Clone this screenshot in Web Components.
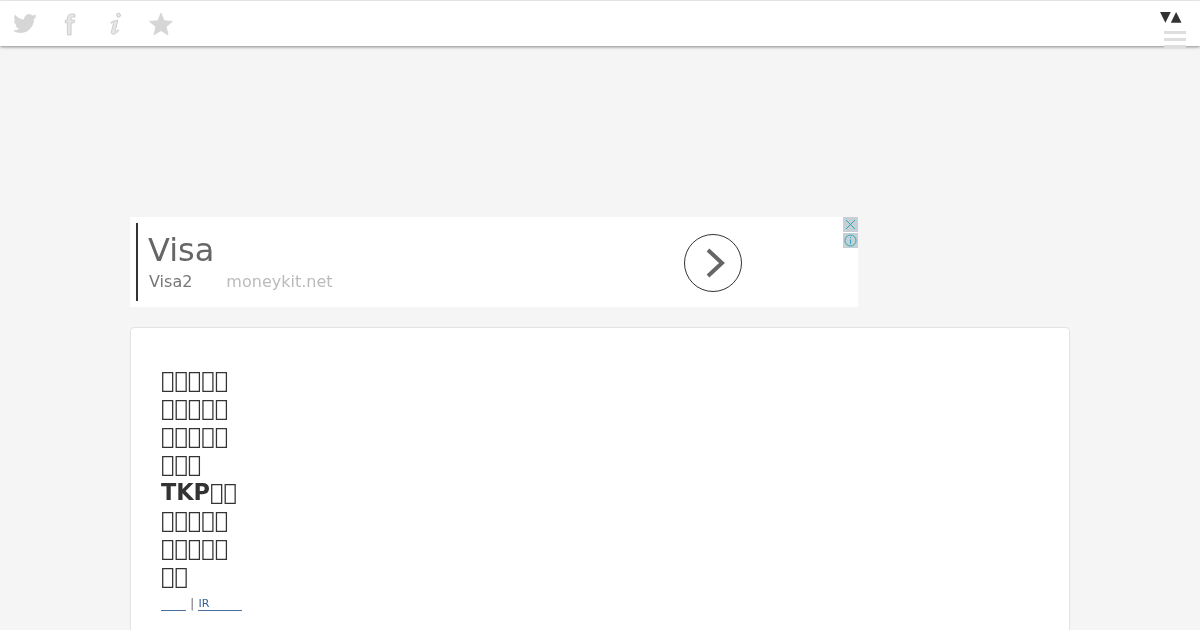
<!DOCTYPE html>
<html>
<head>
<meta charset="utf-8">
<style>
html,body{margin:0;padding:0;background:#f5f5f5;overflow:hidden;height:630px}
body{font-family:"DejaVu Sans",sans-serif;color:#333}
</style>
</head>
<body>
<top-bar></top-bar>
<main-column>
  <ad-banner title="Visa" sub="Visa2" site="moneykit.net"></ad-banner>
  <news-card>
    <div>&#xE000;&#xE001;&#xE002;&#xE003;&#xE004;</div>
    <div>&#xE000;&#xE001;&#xE002;&#xE003;&#xE004;</div>
    <div>&#xE000;&#xE001;&#xE002;&#xE003;&#xE004;</div>
    <div>&#xE000;&#xE001;&#xE002;</div>
    <div>TKP&#xE000;&#xE001;</div>
    <div>&#xE000;&#xE001;&#xE002;&#xE003;&#xE004;</div>
    <div>&#xE000;&#xE001;&#xE002;&#xE003;&#xE004;</div>
    <div>&#xE000;&#xE001;</div>
  </news-card>
</main-column>
<script>
// top bar with share icons and the menu toggle
const barTemplate=document.createElement('template');
barTemplate.innerHTML=`
<style>
:host{display:flex;justify-content:space-between;box-sizing:border-box;height:45px;margin-top:1px;background:#fff;box-shadow:0 1px 3px rgba(0,0,0,.45)}
.icons{display:flex;gap:21px;padding:11px 0 0 14px;align-items:flex-start}
svg{display:block;fill:#d6d6d6;stroke:#cfcfcf;stroke-width:.6;filter:blur(.35px)}
svg.thin{fill:#e6e6e6;stroke:#c8c8c8;stroke-width:.9}
.menu{display:flex;flex-direction:column;align-items:flex-end;padding-right:14px;will-change:transform}
.arrows{flex:none;font:14px/14px "DejaVu Sans",sans-serif;color:#333;height:30px;padding-top:8px;box-sizing:border-box;width:22px;margin-right:4px;white-space:nowrap}
.line{flex:none;width:22px;height:3px;background:#dedede;margin-bottom:4px;filter:blur(.3px)}
</style>
<div class="icons">
<svg width="24" height="24" viewBox="0 0 24 24"><path transform="translate(-1 1)" d="M23 3.600c-.8.4-1.700.6-2.600.7.900-.6 1.600-1.400 2-2.500-.9.500-1.900.9-2.900 1.100C18.600 2 17.400 1.400 16.100 1.400c-2.500 0-4.600 2-4.600 4.600 0 .4 0 .7.100 1C7.800 6.800 4.400 5 2.100 2.200 1.700 2.900 1.500 3.700 1.500 4.500c0 1.600.8 3 2 3.800-.8 0-1.500-.2-2.100-.6v.1c0 2.200 1.600 4.100 3.700 4.500-.4.100-.8.200-1.200.2-.3 0-.6 0-.9-.1.600 1.800 2.300 3.200 4.300 3.200-1.600 1.200-3.600 2-5.700 2-.4 0-.7 0-1.100-.1C2.600 18.800 5 19.600 7.500 19.600c8.500 0 13.100-7 13.100-13.100v-.6c.9-.6 1.700-1.400 2.400-2.300z"/></svg>
<svg class="thin" width="24" height="24" viewBox="0 0 24 24"><path transform="translate(1 0)" d="M7.400 23V10.800H5.200V8.200h2.200V6.400C7.400 3.600 8.800 2 11.800 2c1.100 0 2.300.1 3.200.3v2.700h-2c-1.500 0-1.900.6-1.900 1.700v1.500h3.500l-.4 2.600h-3.100V23z"/></svg>
<svg class="thin" width="24" height="24" viewBox="0 0 24 24"><g transform="translate(1 0)"><circle cx="13.500" cy="3.200" r="2"/><path d="M12.800 8.200l-2.500 10.300c-.2 1 .5 1.200 1.400.6l1.500-1.300.5.600c-1.200 1.700-2.900 3.800-5.300 3.800-1.900 0-2.300-1.300-1.900-2.900l2-8c.2-.9-.2-1.200-1-.8l-1.300.8-.4-.7c1.700-1.400 4.300-2.200 7-2.400z"/></g></svg>
<svg width="24" height="24" viewBox="0 0 24 24"><path d="M12 1l3.200 7.700 8.300.7-6.300 5.400 1.900 8.100L12 18.600l-7.100 4.300 1.900-8.100L.5 9.400l8.300-.7z"/></svg>
</div>
<div class="menu">
<div class="arrows">&#x25BC;&#x25B2;</div>
<div class="line"></div><div class="line"></div><div class="line"></div>
</div>`;
class TopBar extends HTMLElement{
    constructor(){
        super();
        this.attachShadow({mode:'open'});
        this.shadowRoot.appendChild(barTemplate.content.cloneNode(true));
    }
}
window.customElements.define("top-bar",TopBar);

// centre column, 940 wide
const columnTemplate=document.createElement('template');
columnTemplate.innerHTML=`
<style>
:host{display:block;width:940px;margin:171px auto 0;will-change:transform}
</style>
<slot></slot>`;
class MainColumn extends HTMLElement{
    constructor(){
        super();
        this.attachShadow({mode:'open'});
        this.shadowRoot.appendChild(columnTemplate.content.cloneNode(true));
    }
}
window.customElements.define("main-column",MainColumn);

// text ad with arrow button and the two small corner marks
const adTemplate=document.createElement('template');
adTemplate.innerHTML=`
<style>
:host{display:block;position:relative;width:728px;height:90px;background:#fff;margin-bottom:20px}
.wrap{display:flex;height:100%;box-sizing:border-box;padding:6px 0 6px 6px}
.text{flex:1;border-left:2px solid #333;padding-left:10px}
h4{margin:0;font:400 32px/42px "DejaVu Sans",sans-serif;color:#666;padding-top:6px}
p{margin:0;font:400 16px/20px "DejaVu Sans",sans-serif;display:flex;gap:34px;padding-left:1px;padding-top:1px}
.sub{color:#777}
.site{color:#bbb}
.go{margin:11px 116px 0 0;width:58px;height:58px;box-sizing:border-box;border:1px solid #333;border-radius:50%;display:flex;align-items:center;justify-content:center}
.go svg{margin-left:3px}
.marks{position:absolute;right:0;top:0;display:flex;flex-direction:column;gap:1px}
.marks svg{display:block;background:#c6d0d4}
</style>
<div class="wrap">
<div class="text"><h4></h4><p><span class="sub"></span><span class="site"></span></p></div>
<div class="go"><svg width="20" height="30" viewBox="0 0 20 30"><path d="M3 2l14 13L3 28" fill="none" stroke="#666" stroke-width="4"/></svg></div>
</div>
<div class="marks">
<svg width="15" height="15" viewBox="0 0 15 15"><path d="M3 3l9 9M12 3l-9 9" stroke="#2aa7c0" fill="none"/></svg>
<svg width="15" height="15" viewBox="0 0 15 15"><circle cx="7.500" cy="7.500" r="5.500" fill="none" stroke="#2aa7c0"/><path d="M7.500 4v1.200M7.500 6.500V11" stroke="#2aa7c0" fill="none"/></svg>
</div>`;
class AdBanner extends HTMLElement{
    constructor(){
        super();
        this.attachShadow({mode:'open'});
        this.shadowRoot.appendChild(adTemplate.content.cloneNode(true));
        this.shadowRoot.querySelector("h4").innerHTML=this.getAttribute("title");
        this.shadowRoot.querySelector(".sub").innerHTML=this.getAttribute("sub");
        this.shadowRoot.querySelector(".site").innerHTML=this.getAttribute("site");
    }
}
window.customElements.define("ad-banner",AdBanner);

// white card holding the headlines
const cardTemplate=document.createElement('template');
cardTemplate.innerHTML=`
<style>
:host{display:block;box-sizing:border-box;min-height:400px;background:#fff;border:1px solid #e2e2e2;border-radius:4px;padding:38px 30px}
.title{font:700 22.4px/28px "DejaVu Sans",sans-serif;color:#333}
.links{font:11px/16px "DejaVu Sans",sans-serif;color:#777;margin-top:6px;display:flex;gap:4px}
.links span{font-size:13px}
a{color:#369;text-decoration:none;border-bottom:1px solid #47709a;display:inline-block;height:14px}
.a1{width:25px}
.a2{width:44px}
</style>
<div class="title"><slot></slot></div>
<div class="links"><a class="a1" href="#"></a><span>|</span><a class="a2" href="#">IR</a></div>`;
class NewsCard extends HTMLElement{
    constructor(){
        super();
        this.attachShadow({mode:'open'});
        this.shadowRoot.appendChild(cardTemplate.content.cloneNode(true));
    }
}
window.customElements.define("news-card",NewsCard);
</script>
</body>
</html>
